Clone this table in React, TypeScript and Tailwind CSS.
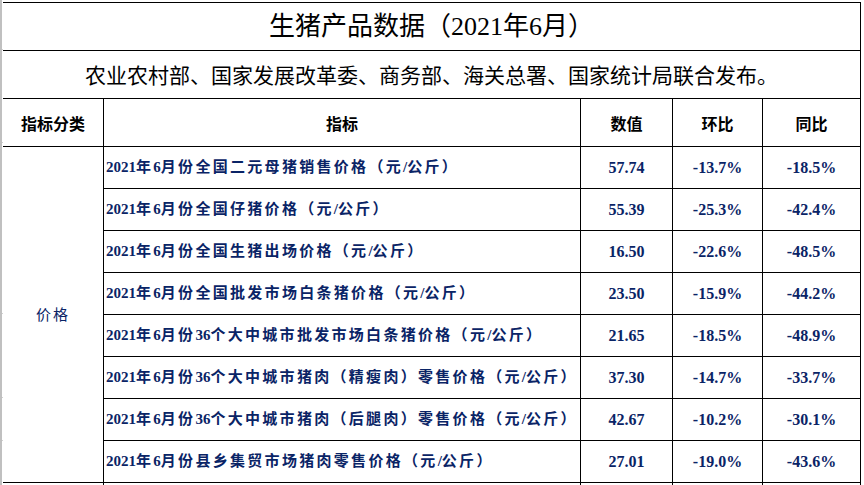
import React from "react";

const rows = [
  ["2021年6月份全国二元母猪销售价格（元/公斤）", "57.74", "-13.7%", "-18.5%"],
  ["2021年6月份全国仔猪价格（元/公斤）", "55.39", "-25.3%", "-42.4%"],
  ["2021年6月份全国生猪出场价格（元/公斤）", "16.50", "-22.6%", "-48.5%"],
  ["2021年6月份全国批发市场白条猪价格（元/公斤）", "23.50", "-15.9%", "-44.2%"],
  ["2021年6月份36个大中城市批发市场白条猪价格（元/公斤）", "21.65", "-18.5%", "-48.9%"],
  ["2021年6月份36个大中城市猪肉（精瘦肉）零售价格（元/公斤）", "37.30", "-14.7%", "-33.7%"],
  ["2021年6月份36个大中城市猪肉（后腿肉）零售价格（元/公斤）", "42.67", "-10.2%", "-30.1%"],
  ["2021年6月份县乡集贸市场猪肉零售价格（元/公斤）", "27.01", "-19.0%", "-43.6%"],
];

function Spaced({ text }: { text: string }) {
  const parts = text.match(/[\x00-\x7f]+|[^\x00-\x7f]+/g) || [];
  return (
    <>
      {parts.map((p, i) =>
        /^[\x00-\x7f]+$/.test(p) ? (
          <span key={i}>{p}</span>
        ) : (
          <span key={i} className="tracking-[2.3px]">
            {p}
          </span>
        )
      )}
    </>
  );
}

const serif = "font-['Liberation_Serif','Noto_Sans_CJK_SC',serif]";

export default function App() {
  return (
    <div className="w-[864px] h-[485px] overflow-hidden bg-white flex">
      <div className="w-[3px] shrink-0 border-l-2 border-[#c0c0c0] flex flex-col">
        <div className="h-[50px] border-b border-[#d0d0d0]" />
        <div className="h-[93px] border-b border-[#d0d0d0]" />
        <div className="h-[171px] border-b border-[#d0d0d0]" />
        <div className="h-[84px] border-b border-[#d0d0d0]" />
        <div className="h-[43px] border-b border-[#d0d0d0]" />
      </div>
      <div className="pt-[2px] shrink-0">
        <div className="w-[858px] border-t border-r border-black">
          <div
            className={`h-[48px] border-b border-black flex items-center justify-center text-[26px] text-black ${serif}`}
          >
            生猪产品数据（2021年6月）
          </div>
          <div className="h-[48px] border-b border-black flex items-center justify-center text-[21px] text-black font-['Noto_Sans_CJK_SC',sans-serif]">
            农业农村部、国家发展改革委、商务部、海关总署、国家统计局联合发布。
          </div>
          <div className="h-[48px] border-b border-black flex text-[16px] font-bold text-black font-['Noto_Sans_CJK_SC',sans-serif]">
            <div className="w-[101px] border-r border-black flex items-center justify-center">指标分类</div>
            <div className="w-[477px] border-r border-black flex items-center justify-center">指标</div>
            <div className="w-[92px] border-r border-black flex items-center justify-center">数值</div>
            <div className="w-[90px] border-r border-black flex items-center justify-center">环比</div>
            <div className="w-[97px] flex items-center justify-center">同比</div>
          </div>
          <div className="flex">
            <div className="w-[101px] border-r border-b border-black flex items-center justify-center text-[15px] text-[#0a2466] tracking-[2px] font-['Noto_Sans_CJK_SC',sans-serif]">
              价格
            </div>
            <div className="flex flex-col">
              {rows.map((r, i) => (
                <div key={i} className="h-[42px] border-b border-black flex text-[#0a2466] font-bold">
                  <div className={`w-[477px] border-r border-black flex items-center pl-[2px] text-[15px] ${serif}`}>
                    <Spaced text={r[0]} />
                  </div>
                  <div className={`w-[92px] border-r border-black flex items-center justify-center text-[16px] ${serif}`}>
                    {r[1]}
                  </div>
                  <div className={`w-[90px] border-r border-black flex items-center justify-center text-[16px] ${serif}`}>
                    {r[2]}
                  </div>
                  <div className={`w-[97px] flex items-center justify-center text-[16px] ${serif}`}>{r[3]}</div>
                </div>
              ))}
            </div>
          </div>
          <div className="h-[42px] flex">
            <div className="w-[101px] border-r border-black" />
            <div className="w-[477px] border-r border-black" />
            <div className="w-[92px] border-r border-black" />
            <div className="w-[90px] border-r border-black" />
            <div className="w-[97px]" />
          </div>
        </div>
      </div>
    </div>
  );
}
